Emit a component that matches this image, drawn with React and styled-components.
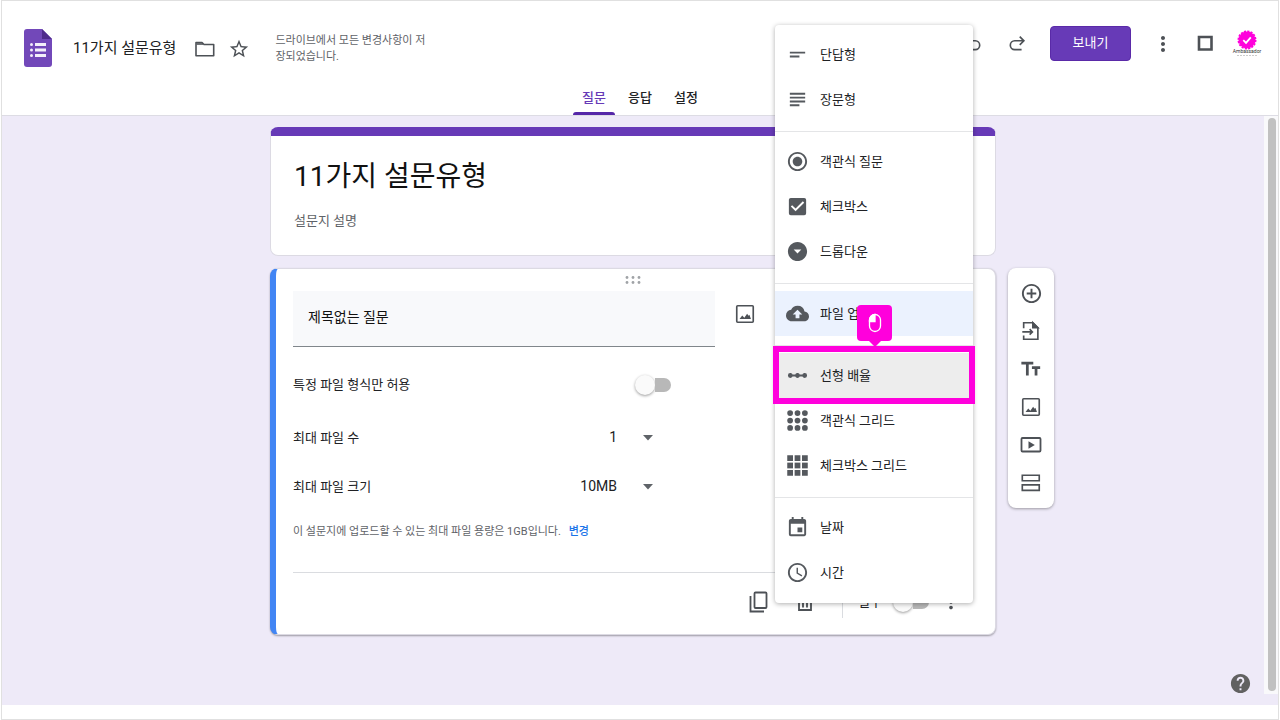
import React, { useState } from 'react';
import styled, { createGlobalStyle, css } from 'styled-components';
import {
  MdShortText, MdSubject, MdRadioButtonChecked, MdCheckBox, MdArrowDropDownCircle, MdBackup,
  MdLinearScale, MdEvent, MdAccessTime, MdStarBorder, MdMoreVert, MdAddCircleOutline, MdHelp,
} from 'react-icons/md';

const GlobalStyle = createGlobalStyle`
  * { box-sizing: border-box; }
  body {
    margin: 0;
    background: #fff;
    color: #202124;
    font-family: Roboto, 'Noto Sans CJK KR', sans-serif;
    font-size: 13px;
    line-height: 20px;
  }
  button, input, select { font: inherit; color: inherit; }
  svg { display: block; flex: none; }
`;

const Frame = styled.div`
  display: flex;
  flex-direction: column;
  min-height: 100vh;
  margin: 0 1px;
  padding-bottom: 14px;
  border: 1px solid #e0e0e0;
`;

const Header = styled.header`
  padding-top: 25px;
  border-bottom: 1px solid #dddce4;
`;

const TopBar = styled.div`
  display: flex;
  align-items: flex-start;
  justify-content: space-between;
  padding: 0 10px 0 22px;
`;

const DocInfo = styled.div`
  display: flex;
  align-items: center;
  height: 44px;
`;

const DocTitle = styled.h1`
  margin: 0 17px 0 21px;
  font-size: 15px;
  font-weight: 400;
  white-space: nowrap;
`;

const SaveStatus = styled.p`
  width: 154px;
  margin: 0 0 0 24px;
  padding-top: 2px;
  color: #5f6368;
  font-size: 11px;
  line-height: 16px;
`;

const IconButton = styled.button`
  display: flex;
  align-items: center;
  justify-content: center;
  flex: none;
  width: ${(props) => props.$width || 40}px;
  height: ${(props) => props.$height || 34}px;
  padding: 0;
  border: 0;
  background: none;
  color: #4d5156;
  cursor: pointer;
`;

const DocActions = styled.div`
  display: flex;
  gap: 10px;
  padding-top: 2px;
`;

const Actions = styled.div`
  display: flex;
  align-items: center;
`;

const SendButton = styled.button`
  width: 81px;
  height: 35px;
  margin: 0 11px;
  padding: 0 0 1px;
  border: 1px solid #5a2aa8;
  border-radius: 4px;
  background: #673ab7;
  color: #fff;
  cursor: pointer;
`;

const Tabs = styled.nav`
  display: flex;
  align-items: flex-end;
  justify-content: center;
  gap: 4px;
  height: 45px;
`;

const Tab = styled.button`
  position: relative;
  height: 36px;
  padding: 2px 9px 0;
  border: 0;
  background: none;
  font-weight: 500;
  cursor: pointer;
  ${(props) => props.$active && css`
    color: #673ab7;
    &::after {
      content: '';
      position: absolute;
      inset: auto 0 0;
      height: 3px;
      border-radius: 3px 3px 0 0;
      background: #5527a8;
    }
  `}
`;

const Workspace = styled.div`
  position: relative;
  display: flex;
  flex: 1;
  background: #eeeaf8;
`;

const Canvas = styled.main`
  display: grid;
  grid-template-columns: 1fr minmax(0, 726px) 1fr;
  align-content: start;
  row-gap: 12px;
  flex: 1;
  padding: 11px 0 70px;
`;

const ScrollTrack = styled.div`
  display: flex;
  width: 14px;
  margin-bottom: 11px;
  padding: 2px 2px 3px 4px;
  background: #f9f9fb;
`;

const ScrollThumb = styled.div`
  flex: 1;
  border-radius: 4px;
  background: #c1c1c1;
`;

const TitleCard = styled.section`
  grid-column: 2;
  display: flex;
  flex-direction: column;
  gap: 13px;
  padding: 20px 23px 22px;
  border: 1px solid #dcdae3;
  border-top: 9px solid #673ab7;
  border-radius: 8px;
  background: #fff;
`;

const TextField = styled.input`
  width: 100%;
  height: ${(props) => (props.$large ? 40 : 24)}px;
  padding: 0 0 4px;
  border: 0;
  outline: 0;
  background: none;
  color: ${(props) => (props.$large ? '#111' : '#5f6368')};
  font-size: ${(props) => (props.$large ? 28 : 13)}px;
`;

const QuestionCard = styled.section`
  grid-column: 2;
  padding: 7px 22px 0 17px;
  border: 1px solid #dcdae3;
  border-left: 6px solid #4285f4;
  border-radius: 8px;
  background: #fff;
  box-shadow: 0 1px 2px rgba(0, 0, 0, 0.35);
`;

const DragHandle = styled.div`
  display: flex;
  justify-content: center;
  height: 15px;
  color: #a0a3a7;
`;

const QuestionHead = styled.div`
  display: flex;
  gap: 10px;
`;

const QuestionField = styled.input`
  flex: 1;
  min-width: 0;
  height: 56px;
  padding: 0 15px 5px;
  border: 0;
  border-bottom: 1px solid #80868b;
  outline: 0;
  background: #f8f9fb;
  color: #111;
  font-size: 14px;
`;

const TypePicker = styled.div`
  position: relative;
  width: 198px;
`;

const Menu = styled.ul`
  position: absolute;
  top: -266px;
  left: 0;
  z-index: 2;
  width: 100%;
  margin: 0;
  padding: 7px 0 8px;
  border-radius: 4px;
  background: #fff;
  box-shadow: 0 1px 5px rgba(0, 0, 0, 0.32);
  list-style: none;
`;

const MenuDivider = styled.li`
  height: 1px;
  margin: 9px 0 7px;
  background: #e4e5e7;
`;

const MenuRow = styled.li`
  position: relative;
`;

const MenuButton = styled.button`
  display: flex;
  align-items: center;
  gap: 11px;
  width: 100%;
  height: 45px;
  padding: 0 11px;
  border: 0;
  background: ${(props) => props.$background || 'none'};
  text-align: left;
  cursor: pointer;
  svg { color: #55595e; }
`;

const Spotlight = styled.div`
  position: absolute;
  inset: -7px -2px -6px -2px;
  border: 6px solid #ff00dc;
  pointer-events: none;
`;

const ClickBadge = styled.div`
  position: absolute;
  top: -48px;
  left: 82px;
  display: flex;
  align-items: center;
  justify-content: center;
  width: 35px;
  height: 36px;
  border-radius: 4px;
  background: #ff00dc;
  pointer-events: none;
  &::after {
    content: '';
    position: absolute;
    top: 100%;
    border: 6px solid transparent;
    border-top-color: #ff00dc;
    border-bottom: 0;
  }
`;

const Settings = styled.div`
  max-width: 378px;
  margin-top: 13px;
`;

const SettingRow = styled.div`
  display: flex;
  align-items: center;
  justify-content: space-between;
  height: 49px;
  &:first-child { margin-bottom: 4px; }
`;

const Switch = styled.input.attrs({ type: 'checkbox', role: 'switch' })`
  appearance: none;
  display: flex;
  align-items: center;
  flex: none;
  width: 36px;
  height: 20px;
  margin: 0;
  cursor: pointer;
  &::before {
    content: '';
    width: 20px;
    height: 20px;
    border-radius: 50%;
    background: #fafafa;
    box-shadow: 0 1px 3px rgba(0, 0, 0, 0.4);
  }
  &::after {
    content: '';
    width: 16px;
    height: 14px;
    border-radius: 0 7px 7px 0;
    background: #b8b8b8;
  }
  &:checked { transform: rotate(180deg); }
`;

const SelectBox = styled.div`
  display: grid;
  align-items: center;
  > * { grid-area: 1 / 1; }
  svg {
    justify-self: end;
    margin-right: 18px;
    color: #5f6368;
    pointer-events: none;
  }
`;

const Select = styled.select`
  appearance: none;
  height: 36px;
  padding: 0 54px 2px 0;
  border: 0;
  outline: 0;
  background: none;
  font-size: 14px;
  text-align-last: right;
`;

const Note = styled.p`
  margin: 0;
  padding-top: 1px;
  color: #5f6368;
  font-size: 11px;
  line-height: 40px;
  a {
    margin-left: 5px;
    color: #1a73e8;
    font-weight: 500;
    text-decoration: none;
  }
`;

const CardFooter = styled.footer`
  display: flex;
  align-items: center;
  justify-content: flex-end;
  height: 62px;
  margin-top: 20px;
  padding-bottom: 3px;
  border-top: 1px solid #dadce0;
`;

const FooterTools = styled.div`
  display: flex;
  gap: 6px;
  padding-right: 17px;
`;

const Required = styled.label`
  display: flex;
  align-items: center;
  gap: 11px;
  height: 32px;
  padding-left: 15px;
  border-left: 1px solid #dadce0;
`;

const SideTools = styled.aside`
  grid-column: 3;
  align-self: start;
  width: 46px;
  margin-left: 12px;
  padding: 6px 3px;
  border-radius: 8px;
  background: #fff;
  box-shadow: 0 1px 3px rgba(0, 0, 0, 0.35);
`;

const HelpButton = styled(IconButton)`
  position: absolute;
  right: 26px;
  bottom: 10px;
  color: #616161;
`;

const AvatarLink = styled.a`
  display: flex;
  justify-content: center;
  width: 42px;
`;

function Logo() {
  return (
    <svg width="28" height="38" viewBox="0 0 28 38">
      <path fill="#7248b9" d="M3 0h15l10 10v25a3 3 0 0 1-3 3H3a3 3 0 0 1-3-3V3a3 3 0 0 1 3-3z" />
      <path fill="#4f2b8c" d="M18 0l10 10H18z" />
      <g fill="#f3effa">
        <circle cx="7.5" cy="15.5" r="1.5" />
        <circle cx="7.5" cy="21" r="1.5" />
        <circle cx="7.5" cy="26.5" r="1.5" />
        <path d="M11 14h11v3H11zM11 19.500h11v3H11zM11 25h11v3H11z" />
      </g>
    </svg>
  );
}

function Line({ children, size = 24, width = 1.8 }) {
  return (
    <svg width={size} height={size} viewBox="0 0 24 24" fill="none" stroke="currentColor" strokeWidth={width}>
      {children}
    </svg>
  );
}

const FolderIcon = () => (
  <Line width={1.6}>
    <path d="M3 18.800V5.500h6l2 2h9.700v11.300H3z" strokeLinejoin="round" />
    <path d="M3.500 7h6.500" />
  </Line>
);

const UndoIcon = () => (
  <Line size={22}>
    <path d="M8.500 4.500L4.500 8.500l4 4M5 8.500h9.500a4.800 4.800 0 0 1 0 9.600H7" />
  </Line>
);

const RedoIcon = () => (
  <Line size={22}>
    <path d="M15 4l4.500 4.500L15 13M19 8.500H9.500a4.800 4.800 0 0 0 0 9.600H17" />
  </Line>
);

const SquareIcon = () => (
  <Line width={2.6}><path d="M6 5h12.500v12.500H6z" /></Line>
);

const PictureIcon = () => (
  <Line size={22}>
    <rect x="3" y="3" width="18" height="18" rx="1" />
    <path fill="currentColor" stroke="none" d="M6 17.500l3-4 2.300 2.500 3-4.200 1.600 2 .9-1 1.700 4.700z" />
  </Line>
);

const ImportIcon = () => (
  <Line size={22}>
    <path d="M4 9V3h10l5.500 5.500V21H4v-4M2.500 13h11M10.500 10L13.500 13l-3 3" />
    <path fill="currentColor" d="M14 3v5.500h5.500z" />
  </Line>
);

const TextIcon = () => (
  <Line size={22} width={3}>
    <path d="M1.500 5.500h13M8 5.500V19M13 10.500h9M17.500 10.500V19" />
  </Line>
);

const VideoIcon = () => (
  <Line size={24}>
    <rect x="2.500" y="5" width="19" height="13.500" rx="1" />
    <path fill="currentColor" stroke="none" d="M9.500 8.300v7.400l6.300-3.700z" />
  </Line>
);

const SectionIcon = () => (
  <Line size={22}>
    <path d="M2.500 3.500h18.500v6H2.500zM2.500 14h18.500v6H2.500z" />
  </Line>
);

const CopyIcon = () => (
  <Line>
    <rect x="7.500" y="2.500" width="12" height="15.500" rx="1" />
    <path d="M3.500 6v15.500h13.500" />
  </Line>
);

const TrashIcon = () => (
  <Line>
    <path d="M6 7v13h12V7M4 6h16M9 4h6M10 9.500v8M14 9.500v8" />
  </Line>
);

const CaretIcon = () => (
  <svg width="10" height="6" viewBox="0 0 10 6"><path fill="currentColor" d="M0 0h10L5 5.500z" /></svg>
);

const steps = [4.3, 12, 19.7];

function GridIcon({ round }) {
  return (
    <svg width="23" height="23" viewBox="0 0 24 24" fill="currentColor">
      {steps.map((y) => steps.map((x) => (
        <rect key={x + '-' + y} x={x - 3} y={y - 3} width="6" height="6" rx={round ? 3 : 0} />
      )))}
    </svg>
  );
}

function DragDots() {
  return (
    <svg width="16" height="8" viewBox="0 0 16 8" fill="currentColor">
      {[2, 8, 14].map((x) => [1.5, 6.5].map((y) => <circle key={x + '-' + y} cx={x} cy={y} r="1.4" />))}
    </svg>
  );
}

function MouseIcon() {
  return (
    <svg width="14" height="20" viewBox="0 0 14 20" fill="none" stroke="#fff" strokeWidth="1.3">
      <rect x="1.500" y="1.500" width="11" height="17" rx="5.500" />
      <path fill="#fff" d="M7 1.500v7H1.500V7A5.500 5.500 0 0 1 7 1.500z" />
    </svg>
  );
}

function Avatar() {
  return (
    <svg width="30" height="28" viewBox="0 0 30 28">
      <circle cx="15" cy="10" r="8.500" fill="#ff00dc" />
      <circle cx="15" cy="10" r="8.700" fill="none" stroke="#ff00dc" strokeWidth="1.600" strokeDasharray="2.200 1.216" />
      <path d="M11.300 10.200l2.700 2.700 4.800-5.600" fill="none" stroke="#fff" strokeWidth="1.800" />
      <text x="15" y="23" textAnchor="middle" fontSize="5" fill="#333">Ambassador</text>
      <path d="M5 25.500h20" stroke="#ccc" strokeWidth="1" strokeDasharray="2 1" />
    </svg>
  );
}

const menuGroups = [
  [
    { label: '단답형', icon: <MdShortText size={23} /> },
    { label: '장문형', icon: <MdSubject size={23} /> },
  ],
  [
    { label: '객관식 질문', icon: <MdRadioButtonChecked size={23} /> },
    { label: '체크박스', icon: <MdCheckBox size={23} /> },
    { label: '드롭다운', icon: <MdArrowDropDownCircle size={23} /> },
  ],
  [{ label: '파일 업로드', icon: <MdBackup size={23} />, background: '#ebf2fe' }],
  [
    { label: '선형 배율', icon: <MdLinearScale size={23} />, background: '#ededed', spotlight: true },
    { label: '객관식 그리드', icon: <GridIcon round /> },
    { label: '체크박스 그리드', icon: <GridIcon /> },
  ],
  [
    { label: '날짜', icon: <MdEvent size={23} /> },
    { label: '시간', icon: <MdAccessTime size={23} /> },
  ],
];

const sideTools = [
  { label: '질문 추가', icon: <MdAddCircleOutline size={23} /> },
  { label: '질문 가져오기', icon: <ImportIcon /> },
  { label: '제목 및 설명 추가', icon: <TextIcon /> },
  { label: '이미지 추가', icon: <PictureIcon /> },
  { label: '동영상 추가', icon: <VideoIcon /> },
  { label: '섹션 추가', icon: <SectionIcon /> },
];

function TypeMenu() {
  return (
    <Menu>
      {menuGroups.map((group, i) => (
        <React.Fragment key={i}>
          {i > 0 && <MenuDivider role="separator" />}
          {group.map((item) => (
            <MenuRow key={item.label}>
              <MenuButton type="button" $background={item.background}>
                {item.icon}
                <span>{item.label}</span>
              </MenuButton>
              {item.spotlight && (
                <>
                  <Spotlight />
                  <ClickBadge><MouseIcon /></ClickBadge>
                </>
              )}
            </MenuRow>
          ))}
        </React.Fragment>
      ))}
    </Menu>
  );
}

function Question() {
  return (
    <QuestionCard>
      <DragHandle><DragDots /></DragHandle>
      <QuestionHead>
        <QuestionField aria-label="질문" defaultValue="제목없는 질문" />
        <IconButton type="button" aria-label="이미지 추가" $height={46}><PictureIcon /></IconButton>
        <TypePicker><TypeMenu /></TypePicker>
      </QuestionHead>
      <Settings>
        <SettingRow>
          <label htmlFor="only-types">특정 파일 형식만 허용</label>
          <Switch id="only-types" />
        </SettingRow>
        <SettingRow>
          <label htmlFor="max-count">최대 파일 수</label>
          <SelectBox>
            <Select id="max-count" defaultValue="1">
              <option>1</option>
              <option>5</option>
            </Select>
            <CaretIcon />
          </SelectBox>
        </SettingRow>
        <SettingRow>
          <label htmlFor="max-size">최대 파일 크기</label>
          <SelectBox>
            <Select id="max-size" defaultValue="10MB">
              <option>1MB</option>
              <option>10MB</option>
            </Select>
            <CaretIcon />
          </SelectBox>
        </SettingRow>
      </Settings>
      <Note>
        이 설문지에 업로드할 수 있는 최대 파일 용량은 1GB입니다. <a href="#storage">변경</a>
      </Note>
      <CardFooter>
        <FooterTools>
          <IconButton type="button" aria-label="복사"><CopyIcon /></IconButton>
          <IconButton type="button" aria-label="삭제"><TrashIcon /></IconButton>
        </FooterTools>
        <Required>
          필수
          <Switch />
        </Required>
        <IconButton type="button" aria-label="더보기" $width={44}><MdMoreVert size={22} /></IconButton>
      </CardFooter>
    </QuestionCard>
  );
}

function App() {
  const [tab, setTab] = useState('질문');

  return (
    <>
      <GlobalStyle />
      <Frame>
        <Header>
          <TopBar>
            <DocInfo>
              <Logo />
              <DocTitle>11가지 설문유형</DocTitle>
              <DocActions>
                <IconButton type="button" aria-label="폴더로 이동" $width={24}><FolderIcon /></IconButton>
                <IconButton type="button" aria-label="별표" $width={24}><MdStarBorder size={22} /></IconButton>
              </DocActions>
              <SaveStatus>드라이브에서 모든 변경사항이 저장되었습니다.</SaveStatus>
            </DocInfo>
            <Actions>
              <IconButton type="button" aria-label="실행취소" $width={44}><UndoIcon /></IconButton>
              <IconButton type="button" aria-label="재실행" $width={44}><RedoIcon /></IconButton>
              <SendButton type="button">보내기</SendButton>
              <IconButton type="button" aria-label="더보기" $width={42}><MdMoreVert size={24} /></IconButton>
              <IconButton type="button" aria-label="창" $width={42}><SquareIcon /></IconButton>
              <AvatarLink href="#account" aria-label="계정"><Avatar /></AvatarLink>
            </Actions>
          </TopBar>
          <Tabs>
            {['질문', '응답', '설정'].map((name) => (
              <Tab key={name} type="button" $active={tab === name} onClick={() => setTab(name)}>{name}</Tab>
            ))}
          </Tabs>
        </Header>
        <Workspace>
          <Canvas>
            <TitleCard>
              <TextField $large aria-label="설문지 제목" defaultValue="11가지 설문유형" />
              <TextField aria-label="설문지 설명" defaultValue="설문지 설명" />
            </TitleCard>
            <Question />
            <SideTools>
              {sideTools.map((tool) => (
                <IconButton key={tool.label} type="button" aria-label={tool.label} $height={38}>{tool.icon}</IconButton>
              ))}
            </SideTools>
          </Canvas>
          <ScrollTrack><ScrollThumb /></ScrollTrack>
          <HelpButton type="button" aria-label="도움말" $width={24} $height={24}><MdHelp size={23} /></HelpButton>
        </Workspace>
      </Frame>
    </>
  );
}

export default App;
